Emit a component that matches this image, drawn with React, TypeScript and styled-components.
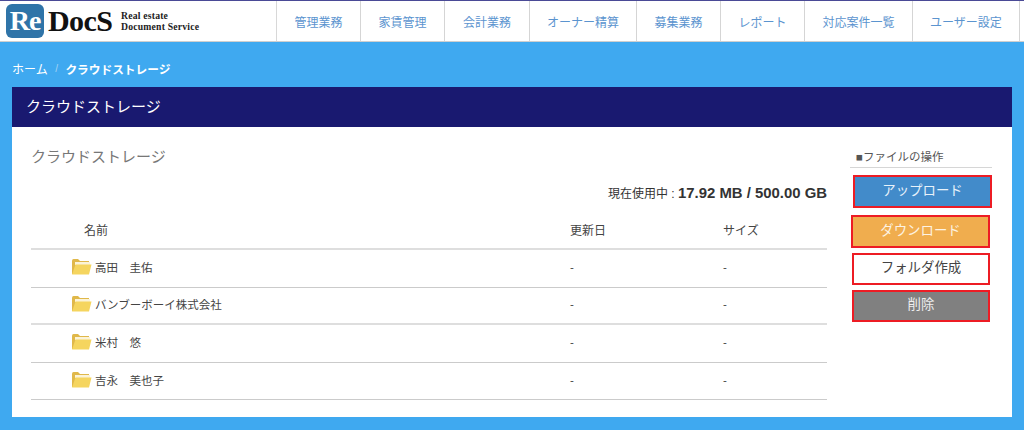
import React from "react";
import styled, { createGlobalStyle } from "styled-components";

const Global = createGlobalStyle`
  html, body { margin: 0; padding: 0; background: #3fa9f0; }
  body { font-family: "Liberation Sans", "Noto Sans CJK JP", sans-serif; width: 1024px; height: 430px; overflow: hidden; }
  * { box-sizing: border-box; }
`;
const Page = styled.div`display:flex;flex-direction:column;width:1024px;height:430px;background:#3fa9f0;`;
const TopBar = styled.header`display:flex;height:42px;background:#fff;border-top:1px solid #4a4a96;border-bottom:1px solid #cfcfcf;`;
const LogoArea = styled.div`width:277px;display:flex;align-items:center;padding-left:6px;border-right:1px solid #d8d8d8;`;
const LogoMark = styled.div`width:38px;height:34px;border-radius:6px;background:#2f74a8;color:#fff;font:bold 28px/34px "Liberation Serif",serif;text-align:center;letter-spacing:-1px;`;
const LogoWord = styled.div`font:bold 30px/34px "Liberation Serif",serif;color:#111;margin-left:4px;letter-spacing:-.6px;width:69px;`;
const LogoTag = styled.div`font:bold 9.7px/11.5px "Liberation Serif",serif;color:#222;margin-left:4px;letter-spacing:.2px;white-space:nowrap;`;
const Nav = styled.nav`display:flex;`;
const NavItem = styled.a<{ $w: number }>`width:${p => p.$w}px;display:flex;align-items:center;justify-content:center;border-right:1px solid #d5d5d5;color:#5b94cf;font-size:12px;`;
const Crumbs = styled.div`display:flex;align-items:center;gap:6px;height:45px;padding:7px 0 0 12px;color:#fff;font-size:12px;`;
const CrumbSep = styled.span`color:#a8d4f4;font-size:10px;margin:0 1.5px;`;
const CrumbNow = styled.b`font-weight:bold;font-size:11.7px;`;
const Panel = styled.section`margin-left:12px;width:1000px;height:330px;background:#fff;display:flex;flex-direction:column;`;
const PanelHead = styled.h1`margin:0;height:40px;background:#191970;color:#fff;font-size:15px;font-weight:normal;line-height:40px;padding-left:14px;`;
const PanelBody = styled.div`display:flex;flex:1;padding:0 0 0 19px;`;
const Main = styled.div`width:796px;display:flex;flex-direction:column;`;
const Title = styled.h2`margin:21px 0 0;height:18px;font-size:15px;line-height:18px;font-weight:normal;color:#777;`;
const Usage = styled.div`margin-top:17px;height:20px;text-align:right;font-size:12px;line-height:20px;color:#333;`;
const UsageNum = styled.b`font-size:14.9px;`;
const Row = styled.div<{ $thick?: boolean }>`
  display:grid;grid-template-columns:539px 153px 1fr;
  align-items:center;height:37.5px;padding-bottom:2px;font-size:11.5px;color:#444;
  border-bottom:${p => p.$thick ? 2 : 1}px solid ${p => p.$thick ? "#dedede" : "#cbcbcb"};
`;
const HeadRow = styled(Row)`height:47px;padding:8px 0 0;font-size:12px;`;
const HeadName = styled.span`padding-left:53px;`;
const NameCell = styled.span`display:flex;align-items:center;gap:3px;padding-left:40px;`;
const Side = styled.aside`width:142px;margin-left:23px;display:flex;flex-direction:column;`;
const SideTitle = styled.div`margin-top:21px;height:20px;padding-left:6px;font-size:11.5px;line-height:18px;color:#555;border-bottom:1px solid #d6d6d6;`;
const Action = styled.button<{ $bg: string; $fg: string; $x: number; $w: number; $h: number; $mt: number }>`
  display:block;margin:${p => p.$mt}px 0 0 ${p => p.$x}px;width:${p => p.$w}px;height:${p => p.$h}px;
  background:${p => p.$bg};color:${p => p.$fg};border:2px solid #ed1c24;padding:0 0 6px;font:13.4px "Liberation Sans","Noto Sans CJK JP",sans-serif;
`;

const Folder = () => (
  <svg width="21" height="18" viewBox="0 0 21 18" aria-hidden="true">
    <path d="M1 3 Q1 1 2.5 1 H7 L9 3 H18 V16 H1Z" fill="#e0b84a" />
    <path d="M4 4 H19 V7 H4Z" fill="#fbf3d8" />
    <path d="M4.5 6.5 H20.5 L18 16.5 H1 Z" fill="#f5d55f" />
  </svg>
);

const nav: [string, number][] = [["管理業務",84],["家賃管理",84],["会計業務",85],["オーナー精算",107],["募集業務",84],["レポート",84],["対応案件一覧",108],["ユーザー設定",107]];
const rows: [string, boolean][] = [["高田　圭佑",false],["バンブーボーイ株式会社",true],["米村　悠",false],["吉永　美也子",false]];

export default function App() {
  return (
    <Page>
      <Global />
      <TopBar>
        <LogoArea>
          <LogoMark>Re</LogoMark>
          <LogoWord>DocS</LogoWord>
          <LogoTag>Real estate<br />Document Service</LogoTag>
        </LogoArea>
        <Nav>{nav.map(([t, w]) => <NavItem key={t} $w={w}>{t}</NavItem>)}</Nav>
      </TopBar>
      <Crumbs>ホーム <CrumbSep>/</CrumbSep> <CrumbNow>クラウドストレージ</CrumbNow></Crumbs>
      <Panel>
        <PanelHead>クラウドストレージ</PanelHead>
        <PanelBody>
          <Main>
            <Title>クラウドストレージ</Title>
            <Usage>現在使用中 : <UsageNum>17.92 MB / 500.00 GB</UsageNum></Usage>
            <HeadRow $thick><HeadName>名前</HeadName><span>更新日</span><span>サイズ</span></HeadRow>
            {rows.map(([n, t]) => (
              <Row key={n} $thick={t}>
                <NameCell><Folder />{n}</NameCell><span>-</span><span>-</span>
              </Row>
            ))}
          </Main>
          <Side>
            <SideTitle>■ファイルの操作</SideTitle>
            <Action $bg="#428bca" $fg="#e8f2fa" $x={3} $w={139} $h={33} $mt={7}>アップロード</Action>
            <Action $bg="#f0ad4e" $fg="#fdf3e3" $x={1} $w={139} $h={33} $mt={7}>ダウンロード</Action>
            <Action $bg="#fff" $fg="#444" $x={2} $w={138} $h={32} $mt={5}>フォルダ作成</Action>
            <Action $bg="#808080" $fg="#eee" $x={2} $w={138} $h={32} $mt={5}>削除</Action>
          </Side>
        </PanelBody>
      </Panel>
    </Page>
  );
}
